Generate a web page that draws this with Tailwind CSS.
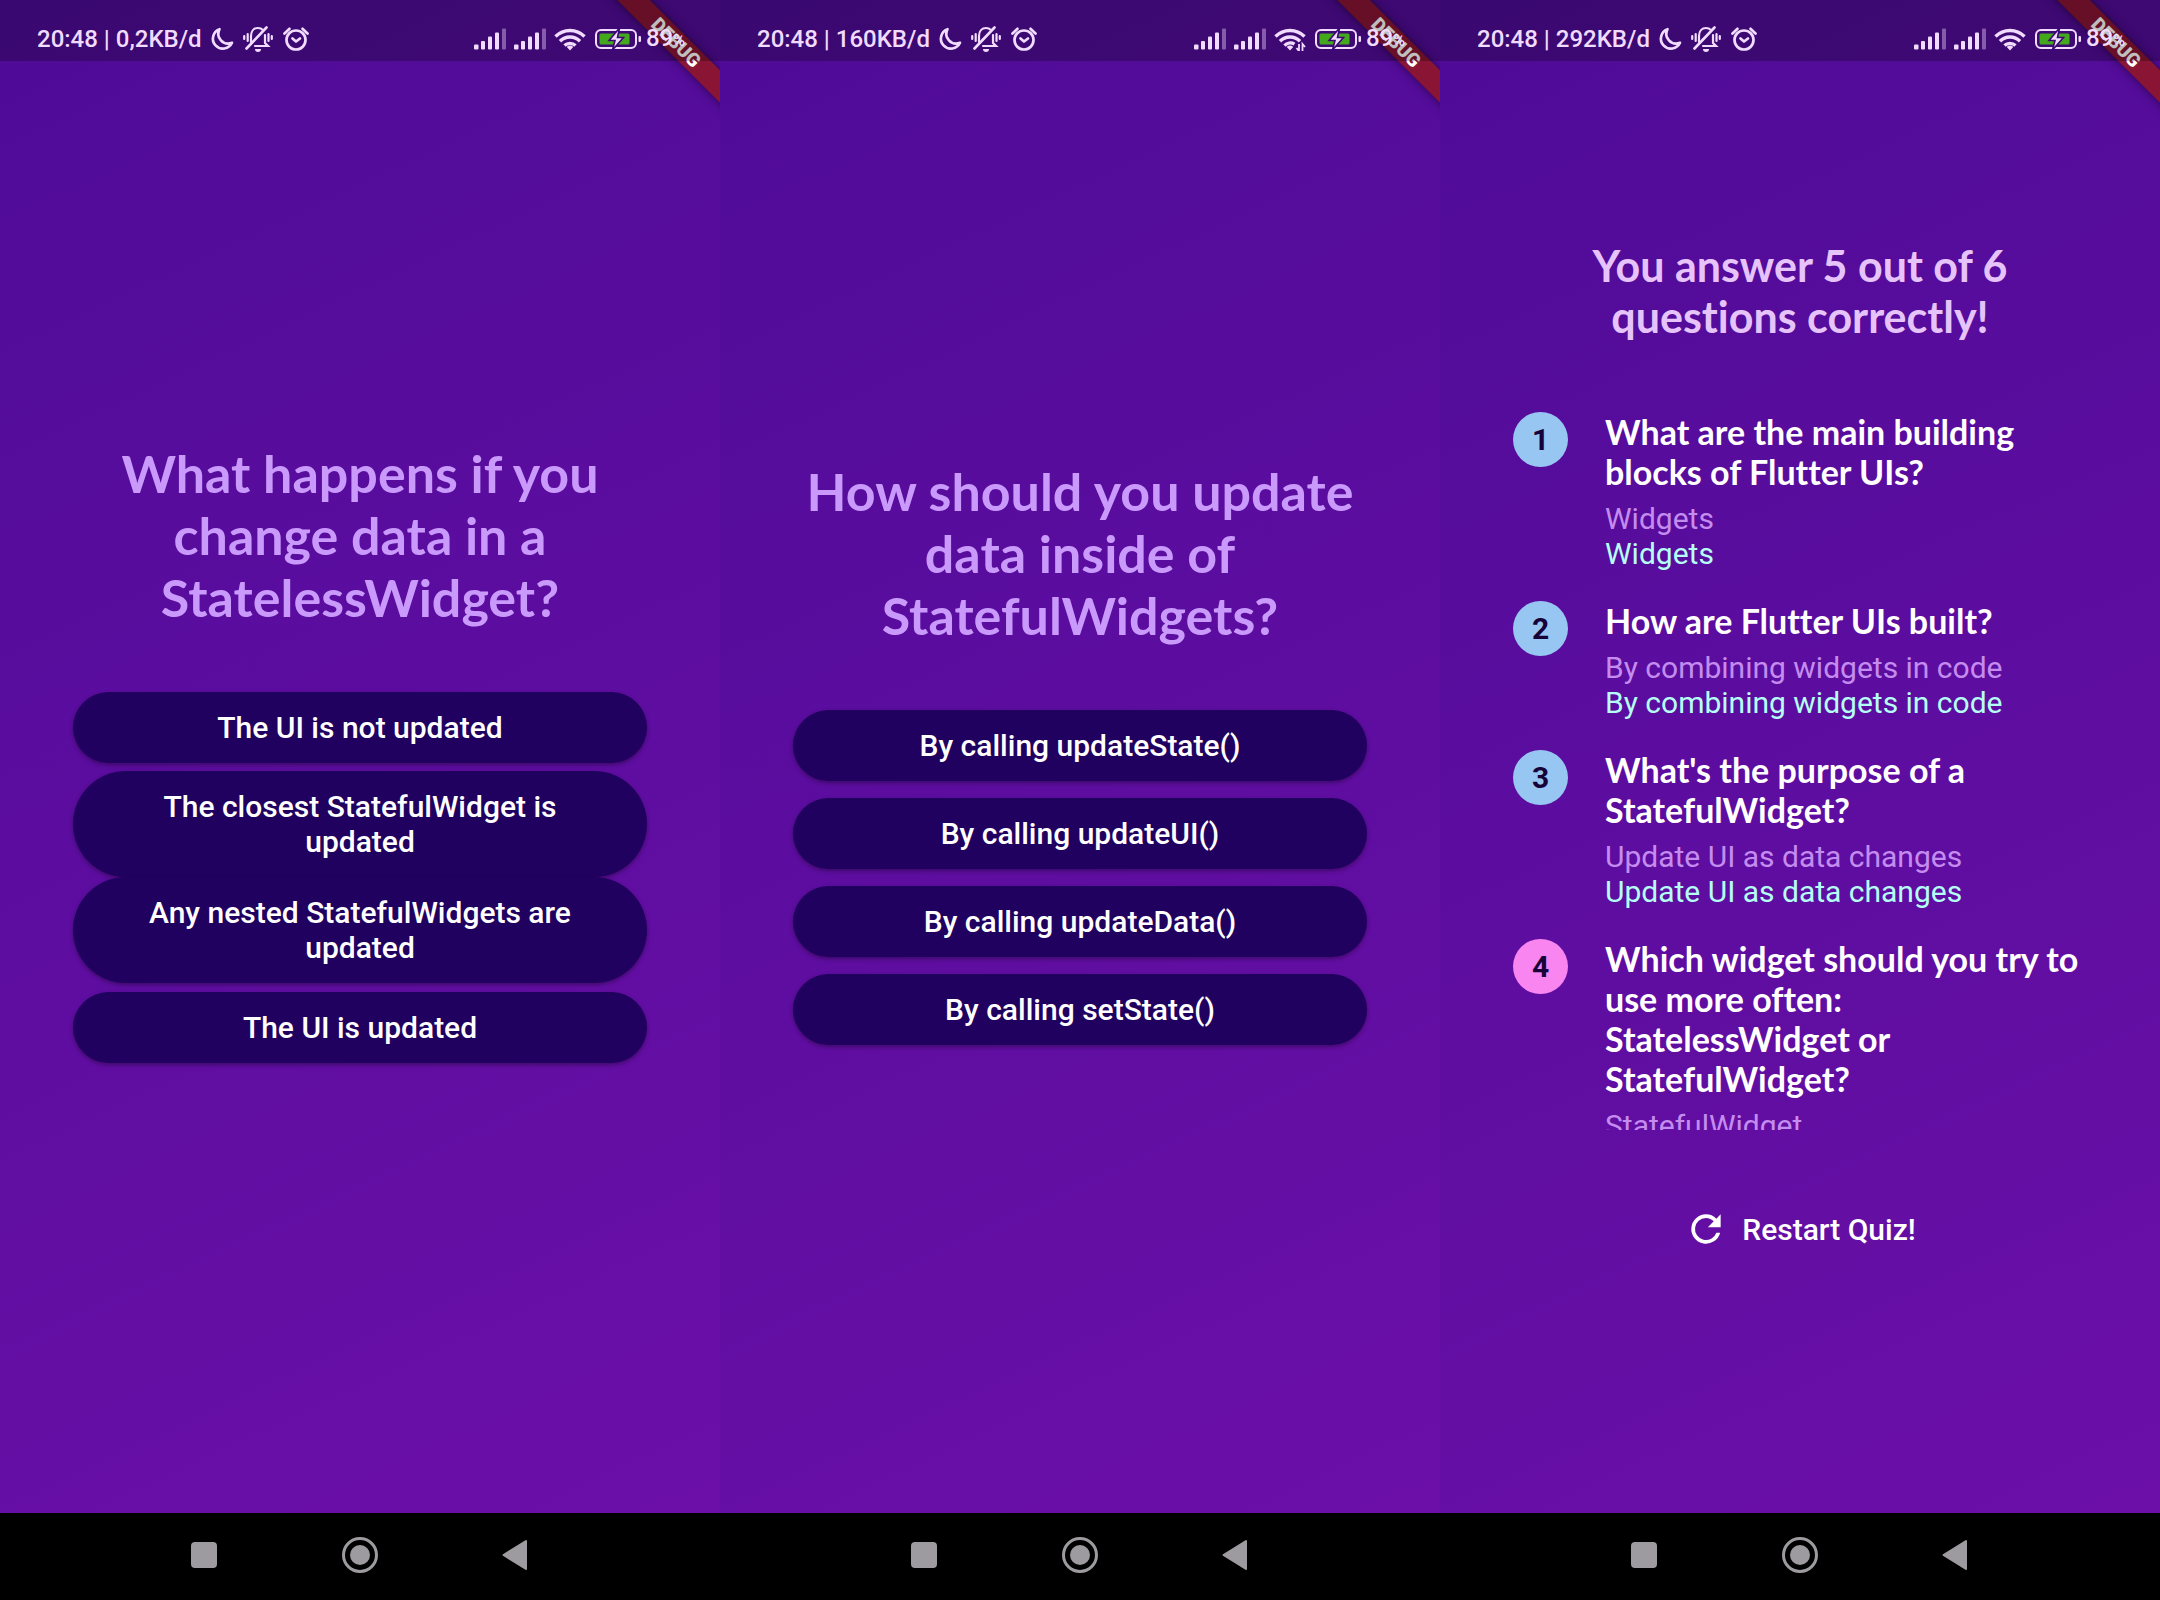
<!DOCTYPE html>
<html lang="en">
<head>
<meta charset="utf-8">
<meta name="viewport" content="width=device-width, initial-scale=1">
<title>Flutter Quiz</title>
<script src="https://cdn.jsdelivr.net/npm/@tailwindcss/browser@4"></script>
</head>
<body class="bg-black font-['Roboto',sans-serif] [font-variant-ligatures:none]">

<!-- Shared icons -->
<svg class="hidden" aria-hidden="true">
  <symbol id="moon" viewBox="0 0 24 24"><path d="M9.5 2.2A10 10 0 1 0 22 15.8 9.8 9.8 0 0 1 9.5 2.2Z" fill="none" stroke="currentColor" stroke-width="2.700" stroke-linejoin="round"/></symbol>
  <symbol id="muted" viewBox="0 0 30 26">
    <g fill="none" stroke="currentColor" stroke-width="2.200" stroke-linecap="round">
      <path d="M1.200 10v3M4.700 8v7M25.500 8v7M28.800 10v3"/>
      <path d="M8 16V10C8 5 11 2 15 2c2 0 4 1 5 2M22 9v8l3 3H12"/>
      <path d="M3.500 22.500 23.500 1.500" stroke-width="2.600"/>
    </g>
    <path d="M12 23h6a3 3 0 0 1-6 0Z" fill="currentColor"/>
  </symbol>
  <symbol id="alarm" viewBox="0 0 26 24">
    <g fill="none" stroke="currentColor" stroke-width="2.700" stroke-linecap="round" stroke-linejoin="round">
      <circle cx="13" cy="13" r="9.500"/><path d="M1.500 6.500 6.500 1.800M24.500 6.500 19.500 1.800"/><path d="m9.500 11.500 3.500 3 4-3"/>
    </g>
  </symbol>
  <symbol id="signal" viewBox="0 0 32 22">
    <g fill="currentColor">
      <rect x="0" y="16.500" width="4.500" height="5" rx="1"/><rect x="7" y="13" width="4" height="8.500" rx="1"/><rect x="14" y="8.500" width="4" height="13" rx="1"/><rect x="21" y="4.500" width="4" height="17" rx="1"/><rect x="28" y="0.500" width="4" height="21" rx="1" opacity=".4"/>
    </g>
  </symbol>
  <symbol id="wifi" viewBox="0 0 32 24">
    <g fill="none" stroke="currentColor" stroke-width="3.400">
      <path d="M1.500 9.500a20.500 20.500 0 0 1 29 0"/><path d="M6 14.200a14 14 0 0 1 20 0"/><path d="M10.500 18.600a8 8 0 0 1 11 0"/>
    </g>
    <path d="M16 23.500l-3.200-3.600a4.500 4.500 0 0 1 6.400 0Z" fill="currentColor"/>
  </symbol>
  <symbol id="wifi-busy" viewBox="0 0 32 24">
    <g fill="none" stroke="currentColor" stroke-width="3.400">
      <path d="M1.500 9.500a20.500 20.500 0 0 1 29 0"/><path d="M6 14.200a14 14 0 0 1 20 0"/><path d="M10.500 18.600a8 8 0 0 1 10 -1.500"/>
    </g>
    <path d="M16 23.500l-3.200-3.600a4.500 4.500 0 0 1 6.400 0Z" fill="currentColor"/>
    <path d="M25 17v7l-2.500-3M28.500 24v-7l2.500 3" fill="none" stroke="currentColor" stroke-width="1.800"/>
  </symbol>
  <symbol id="battery" viewBox="0 0 46 22">
    <rect x="1" y="2" width="40" height="18" rx="5" fill="none" stroke="currentColor" stroke-width="2"/>
    <rect x="43.500" y="8" width="2.500" height="6" rx="1" fill="currentColor"/>
    <rect x="4.500" y="5.500" width="30" height="11" rx="1.500" fill="#43a81c"/>
    <path d="M24.500 0 14 12.500h6L17.500 22 28.500 9.500h-6Z" fill="currentColor" stroke="#3d0873" stroke-width="1.600"/>
  </symbol>
  <symbol id="nav-recent" viewBox="0 0 36 36"><rect x="4" y="5" width="26" height="26" rx="4" fill="currentColor"/></symbol>
  <symbol id="nav-home" viewBox="0 0 36 36"><circle cx="18" cy="18" r="16.500" fill="none" stroke="currentColor" stroke-width="3"/><circle cx="18" cy="18" r="10" fill="currentColor"/></symbol>
  <symbol id="nav-back" viewBox="0 0 36 36"><path d="M6.500 18 29 4v28Z" fill="currentColor" stroke="currentColor" stroke-width="2" stroke-linejoin="round"/></symbol>
  <symbol id="refresh" viewBox="0 0 24 24"><path fill="currentColor" d="M17.650 6.350A7.958 7.958 0 0 0 12 4a8 8 0 1 0 7.730 10h-2.080A6 6 0 1 1 12 6c1.660 0 3.140.690 4.220 1.780L13 11h7V4l-2.350 2.350z"/></symbol>
</svg>

<div class="grid min-h-screen grid-cols-3">

  <!-- Screen 1: question with four answers -->
  <section class="flex flex-col">
    <div class="relative flex flex-1 flex-col justify-center overflow-hidden bg-[linear-gradient(155deg,#4e0b97,#6b0fa8)] px-[73px]">
      <div class="absolute top-[31px] right-[-76px] h-[23px] w-[240px] rotate-45 bg-[#a01807]/70 text-center text-[19px] leading-[23px] font-black text-white shadow-[0_0_10px_rgba(0,0,0,0.5)]">DEBUG</div>
      <header class="absolute inset-x-0 top-0 flex h-[61px] items-center justify-between bg-black/25 pt-4 pr-[35px] pl-[37px] text-2xl leading-7 font-medium text-[#f1dcff]">
        <div class="flex items-center">
          <span>20:48 | 0,2KB/d</span>
          <svg class="ml-2 h-6 w-6"><use href="#moon"/></svg>
          <svg class="ml-[9px] h-[26px] w-[30px]"><use href="#muted"/></svg>
          <svg class="ml-[10px] h-6 w-[26px]"><use href="#alarm"/></svg>
        </div>
        <div class="flex items-center">
          <svg class="h-[22px] w-8"><use href="#signal"/></svg>
          <svg class="ml-2 h-[22px] w-8"><use href="#signal"/></svg>
          <svg class="ml-2 h-6 w-8"><use href="#wifi"/></svg>
          <svg class="ml-[9px] h-[22px] w-[46px]"><use href="#battery"/></svg>
          <span class="ml-[5px]">89<span class="text-base">%</span></span>
        </div>
      </header>
      <main>
        <h1 class="text-center font-['Lato',sans-serif] text-[52px] leading-[62px] font-bold text-[#c999fb]">What happens if you change data in a StatelessWidget?</h1>
        <ul class="mt-[55px] text-[30px] leading-[35px] font-medium text-white">
          <li class="flex min-h-[88px] items-center"><button class="w-full rounded-full bg-[#21015f] px-[70px] py-[18px] shadow-[0_2px_4px_rgba(0,0,0,0.35)]">The UI is not updated</button></li>
          <li class="flex min-h-[88px] items-center"><button class="w-full rounded-full bg-[#21015f] px-[70px] py-[18px] shadow-[0_2px_4px_rgba(0,0,0,0.35)]">The closest StatefulWidget is updated</button></li>
          <li class="flex min-h-[88px] items-center"><button class="w-full rounded-full bg-[#21015f] px-[70px] py-[18px] shadow-[0_2px_4px_rgba(0,0,0,0.35)]">Any nested StatefulWidgets are updated</button></li>
          <li class="flex min-h-[88px] items-center"><button class="w-full rounded-full bg-[#21015f] px-[70px] py-[18px] shadow-[0_2px_4px_rgba(0,0,0,0.35)]">The UI is updated</button></li>
        </ul>
      </main>
    </div>
    <nav class="flex h-[87px] items-center justify-center bg-black pb-1 text-[#9e9ba0]">
      <button class="flex w-[155px] justify-center" aria-label="Recent apps"><svg class="h-9 w-9"><use href="#nav-recent"/></svg></button>
      <button class="flex w-[155px] justify-center" aria-label="Home"><svg class="h-9 w-9"><use href="#nav-home"/></svg></button>
      <button class="flex w-[155px] justify-center" aria-label="Back"><svg class="h-9 w-9"><use href="#nav-back"/></svg></button>
    </nav>
  </section>

  <!-- Screen 2: question with four answers -->
  <section class="flex flex-col">
    <div class="relative flex flex-1 flex-col justify-center overflow-hidden bg-[linear-gradient(155deg,#4e0b97,#6b0fa8)] px-[73px]">
      <div class="absolute top-[31px] right-[-76px] h-[23px] w-[240px] rotate-45 bg-[#a01807]/70 text-center text-[19px] leading-[23px] font-black text-white shadow-[0_0_10px_rgba(0,0,0,0.5)]">DEBUG</div>
      <header class="absolute inset-x-0 top-0 flex h-[61px] items-center justify-between bg-black/25 pt-4 pr-[35px] pl-[37px] text-2xl leading-7 font-medium text-[#f1dcff]">
        <div class="flex items-center">
          <span>20:48 | 160KB/d</span>
          <svg class="ml-2 h-6 w-6"><use href="#moon"/></svg>
          <svg class="ml-[9px] h-[26px] w-[30px]"><use href="#muted"/></svg>
          <svg class="ml-[10px] h-6 w-[26px]"><use href="#alarm"/></svg>
        </div>
        <div class="flex items-center">
          <svg class="h-[22px] w-8"><use href="#signal"/></svg>
          <svg class="ml-2 h-[22px] w-8"><use href="#signal"/></svg>
          <svg class="ml-2 h-6 w-8"><use href="#wifi-busy"/></svg>
          <svg class="ml-[9px] h-[22px] w-[46px]"><use href="#battery"/></svg>
          <span class="ml-[5px]">89<span class="text-base">%</span></span>
        </div>
      </header>
      <main>
        <h1 class="text-center font-['Lato',sans-serif] text-[52px] leading-[62px] font-bold text-[#c999fb]">How should you update data inside of StatefulWidgets?</h1>
        <ul class="mt-[55px] text-[30px] leading-[35px] font-medium text-white">
          <li class="flex min-h-[88px] items-center"><button class="w-full rounded-full bg-[#21015f] px-[70px] py-[18px] shadow-[0_2px_4px_rgba(0,0,0,0.35)]">By calling updateState()</button></li>
          <li class="flex min-h-[88px] items-center"><button class="w-full rounded-full bg-[#21015f] px-[70px] py-[18px] shadow-[0_2px_4px_rgba(0,0,0,0.35)]">By calling updateUI()</button></li>
          <li class="flex min-h-[88px] items-center"><button class="w-full rounded-full bg-[#21015f] px-[70px] py-[18px] shadow-[0_2px_4px_rgba(0,0,0,0.35)]">By calling updateData()</button></li>
          <li class="flex min-h-[88px] items-center"><button class="w-full rounded-full bg-[#21015f] px-[70px] py-[18px] shadow-[0_2px_4px_rgba(0,0,0,0.35)]">By calling setState()</button></li>
        </ul>
      </main>
    </div>
    <nav class="flex h-[87px] items-center justify-center bg-black pb-1 text-[#9e9ba0]">
      <button class="flex w-[155px] justify-center" aria-label="Recent apps"><svg class="h-9 w-9"><use href="#nav-recent"/></svg></button>
      <button class="flex w-[155px] justify-center" aria-label="Home"><svg class="h-9 w-9"><use href="#nav-home"/></svg></button>
      <button class="flex w-[155px] justify-center" aria-label="Back"><svg class="h-9 w-9"><use href="#nav-back"/></svg></button>
    </nav>
  </section>

  <!-- Screen 3: results -->
  <section class="flex flex-col">
    <div class="relative flex flex-1 flex-col justify-center overflow-hidden bg-[linear-gradient(155deg,#4e0b97,#6b0fa8)] px-[73px]">
      <div class="absolute top-[31px] right-[-76px] h-[23px] w-[240px] rotate-45 bg-[#a01807]/70 text-center text-[19px] leading-[23px] font-black text-white shadow-[0_0_10px_rgba(0,0,0,0.5)]">DEBUG</div>
      <header class="absolute inset-x-0 top-0 flex h-[61px] items-center justify-between bg-black/25 pt-4 pr-[35px] pl-[37px] text-2xl leading-7 font-medium text-[#f1dcff]">
        <div class="flex items-center">
          <span>20:48 | 292KB/d</span>
          <svg class="ml-2 h-6 w-6"><use href="#moon"/></svg>
          <svg class="ml-[9px] h-[26px] w-[30px]"><use href="#muted"/></svg>
          <svg class="ml-[10px] h-6 w-[26px]"><use href="#alarm"/></svg>
        </div>
        <div class="flex items-center">
          <svg class="h-[22px] w-8"><use href="#signal"/></svg>
          <svg class="ml-2 h-[22px] w-8"><use href="#signal"/></svg>
          <svg class="ml-2 h-6 w-8"><use href="#wifi"/></svg>
          <svg class="ml-[9px] h-[22px] w-[46px]"><use href="#battery"/></svg>
          <span class="ml-[5px]">89<span class="text-base">%</span></span>
        </div>
      </header>
      <main class="flex flex-col items-center">
        <h1 class="text-center font-['Lato',sans-serif] text-[43px] leading-[51px] font-bold text-[#e6c4fb]">You answer 5 out of 6 questions correctly!</h1>
        <ol class="mt-[55px] h-[733px] w-full overflow-hidden text-[30px] leading-[35px]">
          <li class="flex items-start gap-[37px] py-[15px]">
            <span class="flex size-[55px] shrink-0 items-center justify-center rounded-full bg-[#96c6f1] font-bold text-[#160238]">1</span>
            <div class="flex-1">
              <h2 class="mb-[9px] font-['Lato',sans-serif] text-[34px] leading-10 font-bold text-white">What are the main building blocks of Flutter UIs?</h2>
              <p class="text-[#c58cf0]">Widgets</p>
              <p class="text-[#b5fef6]">Widgets</p>
            </div>
          </li>
          <li class="flex items-start gap-[37px] py-[15px]">
            <span class="flex size-[55px] shrink-0 items-center justify-center rounded-full bg-[#96c6f1] font-bold text-[#160238]">2</span>
            <div class="flex-1">
              <h2 class="mb-[9px] font-['Lato',sans-serif] text-[34px] leading-10 font-bold text-white">How are Flutter UIs built?</h2>
              <p class="text-[#c58cf0]">By combining widgets in code</p>
              <p class="text-[#b5fef6]">By combining widgets in code</p>
            </div>
          </li>
          <li class="flex items-start gap-[37px] py-[15px]">
            <span class="flex size-[55px] shrink-0 items-center justify-center rounded-full bg-[#96c6f1] font-bold text-[#160238]">3</span>
            <div class="flex-1">
              <h2 class="mb-[9px] font-['Lato',sans-serif] text-[34px] leading-10 font-bold text-white">What's the purpose of a StatefulWidget?</h2>
              <p class="text-[#c58cf0]">Update UI as data changes</p>
              <p class="text-[#b5fef6]">Update UI as data changes</p>
            </div>
          </li>
          <li class="flex items-start gap-[37px] py-[15px]">
            <span class="flex size-[55px] shrink-0 items-center justify-center rounded-full bg-[#f985f1] font-bold text-[#160238]">4</span>
            <div class="flex-1">
              <h2 class="mb-[9px] font-['Lato',sans-serif] text-[34px] leading-10 font-bold text-white">Which widget should you try to use more often: StatelessWidget or StatefulWidget?</h2>
              <p class="text-[#c58cf0]">StatefulWidget</p>
            </div>
          </li>
        </ol>
        <button class="mt-[55px] flex h-[88px] items-center gap-[14px] text-[30px] leading-[35px] font-medium text-white"><svg class="size-11"><use href="#refresh"/></svg>Restart Quiz!</button>
      </main>
    </div>
    <nav class="flex h-[87px] items-center justify-center bg-black pb-1 text-[#9e9ba0]">
      <button class="flex w-[155px] justify-center" aria-label="Recent apps"><svg class="h-9 w-9"><use href="#nav-recent"/></svg></button>
      <button class="flex w-[155px] justify-center" aria-label="Home"><svg class="h-9 w-9"><use href="#nav-home"/></svg></button>
      <button class="flex w-[155px] justify-center" aria-label="Back"><svg class="h-9 w-9"><use href="#nav-back"/></svg></button>
    </nav>
  </section>

</div>
</body>
</html>
